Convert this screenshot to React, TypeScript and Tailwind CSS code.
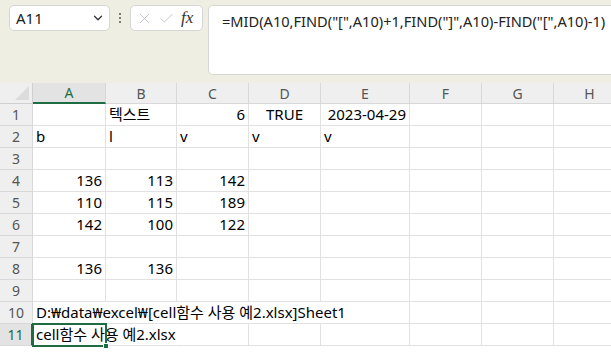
import { ChevronDown, X, Check } from "lucide-react";

type Cell = { t?: string; align?: "l" | "r" | "c"; hideR?: boolean };

const cols = ["A", "B", "C", "D", "E", "F", "G", "H"];

const rows: Cell[][] = [
  [{}, { t: "텍스트" }, { t: "6", align: "r" }, { t: "TRUE", align: "c" }, { t: "2023-04-29", align: "r" }, {}, {}, {}],
  [{ t: "b" }, { t: "l" }, { t: "v" }, { t: "v" }, { t: "v" }, {}, {}, {}],
  [{}, {}, {}, {}, {}, {}, {}, {}],
  [{ t: "136", align: "r" }, { t: "113", align: "r" }, { t: "142", align: "r" }, {}, {}, {}, {}, {}],
  [{ t: "110", align: "r" }, { t: "115", align: "r" }, { t: "189", align: "r" }, {}, {}, {}, {}, {}],
  [{ t: "142", align: "r" }, { t: "100", align: "r" }, { t: "122", align: "r" }, {}, {}, {}, {}, {}],
  [{}, {}, {}, {}, {}, {}, {}, {}],
  [{ t: "136", align: "r" }, { t: "136", align: "r" }, {}, {}, {}, {}, {}, {}],
  [{}, {}, {}, {}, {}, {}, {}, {}],
  [
    { t: "D:₩data₩excel₩[cell함수 사용 예2.xlsx]Sheet1", hideR: true },
    { hideR: true },
    { hideR: true },
    { hideR: true },
    {},
    {},
    {},
    {},
  ],
  [{ t: "cell함수 사용 예2.xlsx", hideR: true }, { hideR: true }, {}, {}, {}, {}, {}, {}],
];

const font = { fontFamily: '"Noto Sans", "Noto Sans CJK KR", sans-serif' };

function Toolbar() {
  return (
    <div className="h-[83px] bg-[#efeee3] flex items-start pt-[5px] pl-[9px] overflow-hidden">
      <div className="shrink-0 w-[101px] h-[26px] bg-white border border-[#d6d6d6] rounded-[5px] flex items-center pl-[6px] pr-[4px]">
        <span className="text-[15px] text-[#222] flex-1">A11</span>
        <ChevronDown size={14} strokeWidth={2.2} className="text-[#333]" />
      </div>
      <div className="shrink-0 w-[20px] h-[26px] flex flex-col items-center justify-center gap-[2px]">
        <span className="w-[2px] h-[2px] bg-[#555] rounded-full" />
        <span className="w-[2px] h-[2px] bg-[#555] rounded-full" />
        <span className="w-[2px] h-[2px] bg-[#555] rounded-full" />
      </div>
      <div className="shrink-0 w-[73px] h-[26px] bg-white border border-[#d6d6d6] rounded-[5px] flex items-center pl-[5px] gap-[5px]">
        <X size={17} strokeWidth={1.2} className="text-[#bdbdbd]" />
        <Check size={17} strokeWidth={1.2} className="text-[#bdbdbd]" />
        <span className="text-[17px] italic text-[#333] ml-[1px]" style={{ fontFamily: '"Liberation Serif", serif' }}>
          fx
        </span>
      </div>
      <div className="shrink-0 ml-[5px] w-[420px] h-[70px] bg-white border border-[#d6d6d6] rounded-[5px] pl-[13px] pt-[3px]">
        <span className="text-[14.6px] text-[#222] whitespace-nowrap">
          =MID(A10,FIND("[",A10)+1,FIND("]",A10)-FIND("[",A10)-1)
        </span>
      </div>
    </div>
  );
}

export default function App() {
  return (
    <div className="w-[611px] h-[353px] overflow-hidden bg-white" style={font}>
      <Toolbar />
      <div className="grid grid-cols-[33px_73px_71px_72px_72px_89px_72px_72px_72px] w-max">
        <div className="h-[21px] bg-[#efefef] border-r border-b border-[#cfcfcf] flex items-end justify-end pr-[3px] pb-[3px]">
          <div className="w-0 h-0 border-l-[14px] border-l-transparent border-b-[14px] border-b-[#dcdcdc]" />
        </div>
        {cols.map((c) => (
          <div
            key={c}
            className={
              c === "A"
                ? "h-[21px] bg-[#e3e3e3] border-r border-[#d8d8d8] border-b-2 border-b-[#1e6c41] text-[#1e6c41] text-[14px] flex items-center justify-center"
                : "h-[21px] bg-[#efefef] border-r border-b border-[#d8d8d8] text-[#555] text-[14px] flex items-center justify-center"
            }
          >
            {c}
          </div>
        ))}
        {rows.map((r, ri) => {
          const num = ri + 1;
          const sel = num === 11;
          return [
            <div
              key={"h" + num}
              className={
                sel
                  ? "h-[22px] bg-[#e3e3e3] border-r-2 border-r-[#1e6c41] border-b border-b-[#d8d8d8] text-[#1e6c41] text-[14px] flex items-center justify-center"
                  : "h-[22px] bg-[#efefef] border-r border-b border-[#d8d8d8] text-[#555] text-[14px] flex items-center justify-center"
              }
            >
              {num}
            </div>,
            ...r.map((cell, ci) => (
              <div
                key={num + "-" + ci}
                className={
                  "h-[22px] relative border-b border-[#e1e1e1] border-r flex items-end pb-[1px] px-[3px] text-[15px] text-black leading-[20px] whitespace-nowrap " +
                  (cell.hideR ? "border-r-transparent " : "border-r-[#e1e1e1] ") +
                  (cell.align === "r" ? "justify-end" : cell.align === "c" ? "justify-center" : "justify-start")
                }
              >
                {cell.t && <span className="relative z-10">{cell.t}</span>}
                {sel && ci === 0 && (
                  <div className="absolute -left-px -top-px w-[75px] h-[24px] border-2 border-[#1e6c41] z-20">
                    <div className="absolute -right-[4px] -bottom-[4px] w-[6px] h-[6px] bg-[#1e6c41] border border-white" />
                  </div>
                )}
              </div>
            )),
          ];
        })}
      </div>
    </div>
  );
}
